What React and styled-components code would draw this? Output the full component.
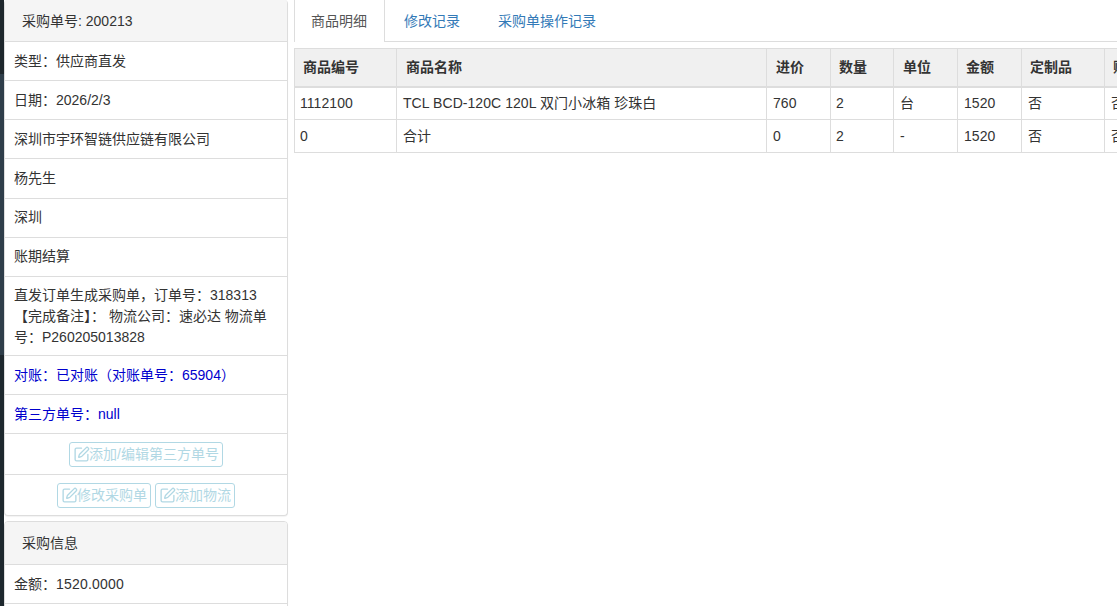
import React from 'react'
import styled, { createGlobalStyle } from 'styled-components'
import { SquarePen } from 'lucide-react'

const columns = [
  { title: '商品编号', width: 102, headPad: 8, cellPad: 5 },
  { title: '商品名称', width: 370, headPad: 9, cellPad: 6 },
  { title: '进价', width: 64, headPad: 9, cellPad: 6 },
  { title: '数量', width: 63, headPad: 8, cellPad: 5 },
  { title: '单位', width: 64, headPad: 9, cellPad: 6 },
  { title: '金额', width: 64, headPad: 8, cellPad: 6 },
  { title: '定制品', width: 83, headPad: 8, cellPad: 6 },
  { title: '赠品', width: 60, headPad: 8, cellPad: 6 },
]

const rows = [
  ['1112100', 'TCL BCD-120C 120L 双门小冰箱 珍珠白', '760', '2', '台', '1520', '否', '否'],
  ['0', '合计', '0', '2', '-', '1520', '否', '否'],
]

const App = () => {
  return (
    <Page>
      <GlobalStyle />
      <SideStrip />
      <LeftColumn>
        <Panel>
          <PanelHeading>采购单号: 200213</PanelHeading>
          <Item>类型：供应商直发</Item>
          <Item>日期：2026/2/3</Item>
          <Item>深圳市宇环智链供应链有限公司</Item>
          <Item>杨先生</Item>
          <Item>深圳</Item>
          <Item>账期结算</Item>
          <Item $multi>直发订单生成采购单，订单号：318313 【完成备注】： 物流公司：速必达 物流单号：P260205013828</Item>
          <Item $blue>对账：已对账（对账单号：65904）</Item>
          <Item $blue>第三方单号：null</Item>
          <ButtonItem>
            <EditButton><SquarePen strokeWidth={1.9} />添加/编辑第三方单号</EditButton>
          </ButtonItem>
          <ButtonItem $last>
            <EditButton><SquarePen strokeWidth={1.9} />修改采购单</EditButton>
            <EditButton><SquarePen strokeWidth={1.9} />添加物流</EditButton>
          </ButtonItem>
        </Panel>
        <Panel $topBorder>
          <PanelHeading $tall>采购信息</PanelHeading>
          <Item>金额：<Amount>1520.0000</Amount></Item>
          <Item>&nbsp;</Item>
        </Panel>
      </LeftColumn>
      <RightColumn>
        <Tabs>
          <Tab $active>商品明细</Tab>
          <Tab>修改记录</Tab>
          <Tab>采购单操作记录</Tab>
        </Tabs>
        <Table>
          <colgroup>
            {columns.map((col) => (
              <col key={col.title} style={{ width: col.width }} />
            ))}
          </colgroup>
          <thead>
            <tr>
              {columns.map((col) => (
                <Th key={col.title} $pad={col.headPad}>{col.title}</Th>
              ))}
            </tr>
          </thead>
          <tbody>
            {rows.map((row) => (
              <tr key={row[0]}>
                {row.map((cell, i) => (
                  <Td key={i} $pad={columns[i].cellPad}>{cell}</Td>
                ))}
              </tr>
            ))}
          </tbody>
        </Table>
      </RightColumn>
    </Page>
  )
}

export default App

const GlobalStyle = createGlobalStyle`
  html, body {
    margin: 0;
    padding: 0;
    background: #ffffff;
    overflow: hidden;
  }

  * {
    box-sizing: border-box;
  }

  body {
    font-family: "Liberation Sans", "Noto Sans CJK SC", sans-serif;
    font-size: 14px;
    line-height: 20px;
    color: #333333;
  }
`

const Page = styled.div`
  display: flex;
  width: 1117px;
  height: 606px;
  overflow: hidden;
  background: #ffffff;
`

const SideStrip = styled.div`
  flex: none;
  width: 4px;
  height: 100%;
  background: linear-gradient(#1e272c 0, #1e272c 74px, #2f3e4a 74px, #2f3e4a 355px, #1e282e 355px, #1e282e 100%);
`

const LeftColumn = styled.div`
  flex: none;
  width: 284px;
  display: flex;
  flex-direction: column;
  gap: 5px;
`

const Panel = styled.div`
  border: 1px solid #dddddd;
  border-top: ${(p) => (p.$topBorder ? '1px solid #dddddd' : 'none')};
  border-radius: 4px;
  background: #ffffff;
  box-shadow: 0 1px 1px rgba(0, 0, 0, 0.05);
`

const PanelHeading = styled.div`
  height: ${(p) => (p.$tall ? '43px' : '42px')};
  display: flex;
  align-items: center;
  padding: 0 17px;
  background: #f5f5f5;
  border-bottom: 1px solid #dddddd;
  border-radius: 3px 3px 0 0;
`

const Item = styled.div`
  padding: ${(p) => (p.$multi ? '8.5px 9px 6.5px' : p.$blue ? '9.2px 9px 7.95px' : '8.575px 9px')};
  border-bottom: 1px solid #dddddd;
  line-height: 21px;
  color: ${(p) => (p.$blue ? '#0000cd' : '#333333')};
`

const Amount = styled.span`
  letter-spacing: 0.2px;
`

const ButtonItem = styled.div`
  height: ${(p) => (p.$last ? '40px' : '41px')};
  display: flex;
  align-items: center;
  justify-content: center;
  gap: 4px;
  border-bottom: ${(p) => (p.$last ? 'none' : '1px solid #dddddd')};
`

const EditButton = styled.button`
  display: inline-flex;
  align-items: center;
  height: 25px;
  padding: 0 3px 0 4px;
  background: #ffffff;
  border: 1px solid #b1d8e4;
  border-radius: 3px;
  font: inherit;
  color: #b1d8e4;

  svg {
    flex: none;
    width: 17px;
    height: 17px;
    margin-left: -1px;
    margin-right: -1px;
  }
`

const RightColumn = styled.div`
  flex: none;
  width: 829px;
  padding-left: 6px;
`

const Tabs = styled.div`
  display: flex;
  height: 42px;
  border-bottom: 1px solid #dddddd;
`

const Tab = styled.div`
  height: ${(p) => (p.$active ? '42px' : '41px')};
  width: ${(p) => (p.$active ? '91px' : 'auto')};
  display: flex;
  align-items: center;
  padding: 0 16px;
  margin-right: ${(p) => (p.$active ? '3px' : '6px')};
  color: ${(p) => (p.$active ? '#555555' : '#337ab7')};
  background: #ffffff;
  border-left: ${(p) => (p.$active ? '1px solid #dddddd' : 'none')};
  border-right: ${(p) => (p.$active ? '1px solid #dddddd' : 'none')};
`

const Table = styled.table`
  table-layout: fixed;
  width: 870px;
  margin-top: 6px;
  border-collapse: collapse;
`

const Th = styled.th`
  height: 38px;
  padding: 0 8px 0 ${(p) => p.$pad}px;
  background: #f0f0f0;
  border: 1px solid #dddddd;
  border-bottom-width: 2px;
  text-align: left;
  font-weight: bold;
`

const Td = styled.td`
  height: 33px;
  padding: 0 6px 0 ${(p) => p.$pad}px;
  border: 1px solid #dddddd;
  text-align: left;
  letter-spacing: 0.06px;
`
